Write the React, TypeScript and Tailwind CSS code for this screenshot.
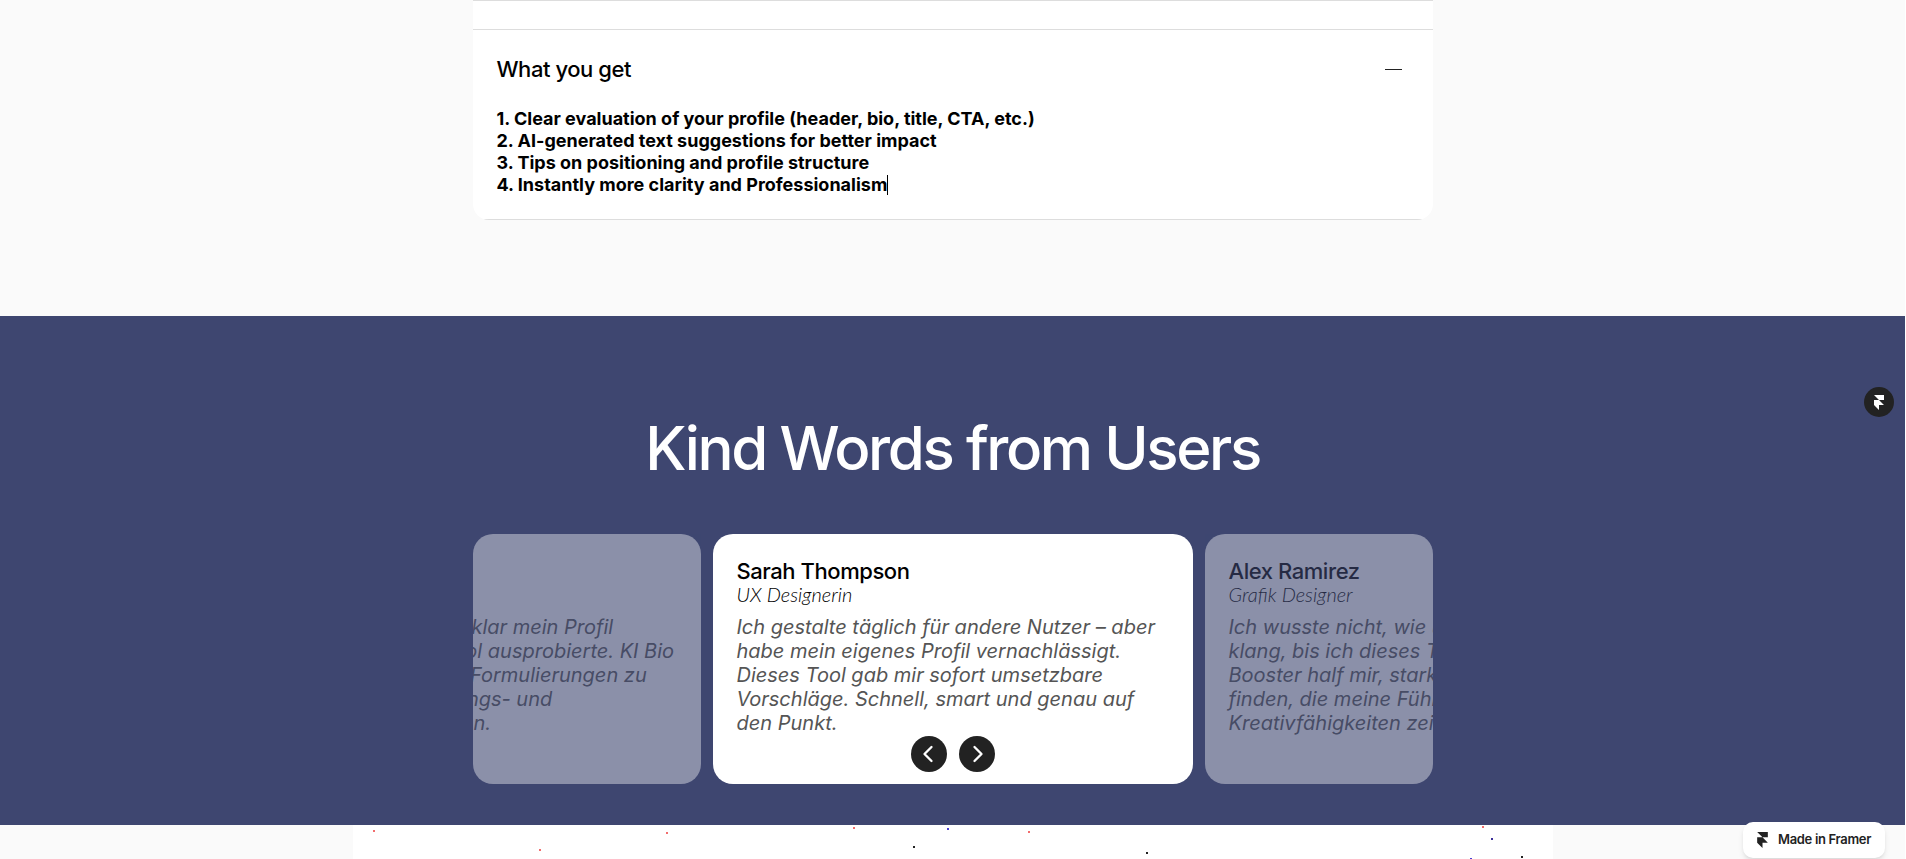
import { ChevronLeft, ChevronRight } from "lucide-react";

type Testimonial = { name: string; role: string; lines: string[] };

const testimonials: Testimonial[] = [
  {
    name: "Michael Braun",
    role: "Marketing Manager",
    lines: [
      "Ich wusste nicht, wie unklar mein Profil",
      "klang, bis ich dieses Tool ausprobierte. KI Bio",
      "Booster half mir, starke Formulierungen zu",
      "finden, die meine Führungs- und",
      "Kreativfähigkeiten zeigen.",
    ],
  },
  {
    name: "Sarah Thompson",
    role: "UX Designerin",
    lines: [
      "Ich gestalte täglich für andere Nutzer – aber",
      "habe mein eigenes Profil vernachlässigt.",
      "Dieses Tool gab mir sofort umsetzbare",
      "Vorschläge. Schnell, smart und genau auf",
      "den Punkt.",
    ],
  },
  {
    name: "Alex Ramirez",
    role: "Grafik Designer",
    lines: [
      "Ich wusste nicht, wie unklar mein Profil",
      "klang, bis ich dieses Tool ausprobierte. KI Bio",
      "Booster half mir, starke Formulierungen zu",
      "finden, die meine Führungs- und",
      "Kreativfähigkeiten zeigen.",
    ],
  },
];

const dots = [
  { x: 20, y: 5, color: "#f26d6d" },
  { x: 186, y: 24, color: "#f26d6d" },
  { x: 313, y: 7, color: "#f26d6d" },
  { x: 500, y: 2, color: "#f26d6d" },
  { x: 560, y: 21, color: "#222222" },
  { x: 594, y: 3, color: "#4a3fd0" },
  { x: 675, y: 6, color: "#f26d6d" },
  { x: 793, y: 27, color: "#222222" },
  { x: 1129, y: 1, color: "#f26d6d" },
  { x: 1138, y: 13, color: "#3b2f9a" },
  { x: 1117, y: 33, color: "#4a3fd0" },
  { x: 1168, y: 31, color: "#222222" },
];

function FramerMark({ className }: { className: string }) {
  return (
    <svg viewBox="4 0 16 24" className={className} fill="currentColor" aria-hidden="true">
      <path d="M4 0h16v8h-8zM4 8h8l8 8H4zM4 16h8v8z" />
    </svg>
  );
}

function TestimonialCard({ item, active }: { item: Testimonial; active: boolean }) {
  return (
    <li
      className={
        active
          ? "h-[250px] w-[480px] shrink-0 rounded-[20px] bg-white p-6"
          : "h-[250px] w-[480px] shrink-0 rounded-[20px] bg-white p-6 opacity-40"
      }
    >
      <h3 className="text-[22px] leading-[26px] font-medium tracking-[-0.02em] text-black">{item.name}</h3>
      <p className="h-[21px] overflow-hidden font-['Lato',sans-serif] text-xl leading-5 font-light text-black italic">
        {item.role}
      </p>
      <p className="mt-2.5 text-xl leading-6 whitespace-nowrap text-[#555555] italic">
        {item.lines.map((line) => (
          <span key={line} className="block">
            {line}
          </span>
        ))}
      </p>
    </li>
  );
}

export default function App() {
  return (
    <div className="relative h-screen overflow-hidden border-r border-white bg-[#fafafa] font-['Inter',sans-serif]">
      <section className="px-6 pb-24">
        <div className="mx-auto max-w-[960px] overflow-hidden rounded-b-2xl">
          <div className="h-[29px] border-t border-[#dddddd] bg-white" />
          <div className="border-y border-[#dddddd] bg-white px-6 pt-6 pb-[23px]">
            <h2>
              <button
                type="button"
                aria-expanded="true"
                className="flex w-full items-center justify-between pr-[7px] text-left text-[22px] leading-[30px] font-medium tracking-[-0.02em] text-black"
              >
                What you get
                <span className="h-px w-[17px] bg-[#222222]" />
              </button>
            </h2>
            <p className="mt-6 text-lg leading-[22px] font-bold text-black">
              <span className="block">1. Clear evaluation of your profile (header, bio, title, CTA, etc.)</span>
              <span className="block">2. AI-generated text suggestions for better impact</span>
              <span className="block">3. Tips on positioning and profile structure</span>
              <span className="flex items-center">
                4. Instantly more clarity and Professionalism
                <span className="h-5 w-px bg-black" />
              </span>
            </p>
          </div>
        </div>
      </section>

      <section className="bg-[#3e4670] px-6 pt-24 pb-[41px]">
        <h2 className="text-center text-6xl leading-[72px] font-medium tracking-[-0.04em] text-white">
          Kind Words from Users
        </h2>
        <div className="relative mx-auto mt-[50px] max-w-[960px] overflow-hidden rounded-[20px]">
          <ul className="flex justify-center gap-3">
            {testimonials.map((item, index) => (
              <TestimonialCard key={item.name} item={item} active={index === 1} />
            ))}
          </ul>
          <div className="absolute inset-x-0 bottom-3 flex justify-center gap-3">
            <button
              type="button"
              aria-label="Previous"
              className="flex size-9 items-center justify-center rounded-full bg-[#222222] pr-0.5 text-white"
            >
              <ChevronLeft className="size-7" strokeWidth={2} />
            </button>
            <button
              type="button"
              aria-label="Next"
              className="flex size-9 items-center justify-center rounded-full bg-[#222222] pl-0.5 text-white"
            >
              <ChevronRight className="size-7" strokeWidth={2} />
            </button>
          </div>
        </div>
      </section>

      <section className="px-6">
        <div className="mx-auto max-w-[1200px] bg-white">
          <svg viewBox="0 0 1200 100" className="block w-full" aria-hidden="true">
            {dots.map((dot) => (
              <rect key={`${dot.x}-${dot.y}`} x={dot.x} y={dot.y} width="2" height="2" fill={dot.color} />
            ))}
          </svg>
        </div>
      </section>

      <a
        href="#edit"
        aria-label="Edit in Framer"
        className="absolute top-[387px] right-[11px] flex size-[30px] items-center justify-center rounded-full bg-[#222222] text-white"
      >
        <FramerMark className="h-[15px] w-2.5" />
      </a>
      <a
        href="#framer"
        className="absolute right-5 bottom-px flex h-9 items-center gap-2.5 rounded-[10px] bg-white px-3.5 text-[13px] font-semibold tracking-tight text-[#222222] shadow-md"
      >
        <FramerMark className="h-4 w-[11px]" />
        Made in Framer
      </a>
    </div>
  );
}
